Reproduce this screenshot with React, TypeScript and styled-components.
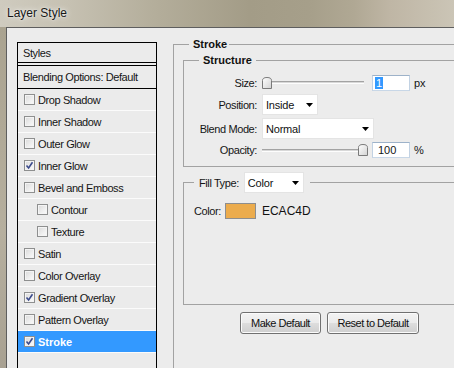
import React from "react";
import styled, { createGlobalStyle } from "styled-components";

const GlobalStyle = createGlobalStyle`
  html, body { margin: 0; padding: 0; background: #ececec; }
  body { font-family: "Liberation Sans", Arial, sans-serif; }
  * { box-sizing: border-box; }
`;

const Window = styled.div`
  width: 454px;
  height: 368px;
  overflow: hidden;
  display: flex;
  flex-direction: column;
`;

const TitleBar = styled.div`
  height: 27px;
  flex: none;
  display: flex;
  align-items: center;
  padding: 0 0 1px 7px;
  background: linear-gradient(
    90deg,
    #cfcbbf 0%,
    #c6c1b2 15%,
    #b3ad9a 35%,
    #a39c87 55%,
    #a69f8a 68%,
    #b0a894 78%,
    #bfb6a5 86%,
    #cbc5b6 100%
  );
  font-size: 12px;
  color: #171717;
  text-shadow: 0 0 6px rgba(255, 255, 255, 0.95), 0 0 2px rgba(255, 255, 255, 0.8);
`;

const Frame = styled.div`
  flex: 1;
  display: flex;
  min-height: 0;
  padding-left: 6px;
  background: linear-gradient(180deg, #aaa390 0%, #b6af9e 60%, #a8a192 100%);
`;

const Client = styled.div`
  flex: 1;
  display: flex;
  align-items: flex-start;
  padding: 10px 0 0 10px;
  border-top: 1px solid #5e5e5e;
  border-left: 1px solid #5e5e5e;
  background: #ececec;
  min-width: 0;
  overflow: hidden;
`;

const StyleList = styled.div`
  flex: none;
  width: 140px;
  height: 420px;
  margin-top: 4px;
  border: 1px solid #000;
  border-bottom: none;
  background: #ebebeb;
  display: flex;
  flex-direction: column;
  font-size: 11px;
  letter-spacing: -0.4px;
  color: #151515;
`;

const ListHeader = styled.div`
  height: 20px;
  flex: none;
  display: flex;
  align-items: center;
  padding: 1px 0 0 5px;
  border-bottom: 1px solid #000;
  margin-bottom: 2px;
`;

const BlendRow = styled.div`
  height: 24px;
  flex: none;
  display: flex;
  align-items: center;
  padding-left: 5px;
  border-top: 1px solid #000;
  border-bottom: 1px solid #000;
`;

const StyleRow = styled.div<{ $indent?: boolean; $selected?: boolean }>`
  height: 22px;
  flex: none;
  display: flex;
  align-items: center;
  gap: 3px;
  padding-left: ${(p) => (p.$indent ? 19 : 6)}px;
  border-bottom: 1px solid #fbfbfb;
  background: ${(p) => (p.$selected ? "#3399ff" : "transparent")};
  color: ${(p) => (p.$selected ? "#fff" : "inherit")};
  font-weight: ${(p) => (p.$selected ? "bold" : "normal")};
  letter-spacing: ${(p) => (p.$selected ? "0" : "-0.4px")};
`;

const CheckBox = styled.span`
  width: 11px;
  height: 11px;
  flex: none;
  display: flex;
  align-items: center;
  justify-content: center;
  border: 1px solid #8e8f8f;
  background: linear-gradient(135deg, #d9d9d9 0%, #efefef 60%, #fbfbfb 100%);
  box-shadow: inset 0 0 0 1px #f4f4f4;
`;

const Group = styled.fieldset<{ $padL?: number; $padR?: number; $padT?: number; $padB?: number }>`
  margin: 0;
  min-inline-size: 0;
  border: 1px solid #a2a2a2;
  padding: ${(p) => p.$padT ?? 0}px ${(p) => p.$padR ?? 0}px ${(p) => p.$padB ?? 0}px
    ${(p) => p.$padL ?? 0}px;
`;

const StrokeGroup = styled(Group)`
  flex: none;
  width: 313px;
  height: 400px;
  margin-left: 16px;
`;

const FillGroup = styled(Group)`
  height: 133px;
  margin-top: 5px;
`;

const Legend = styled.legend<{ $ml: number; $pl: number; $pr: number }>`
  margin-left: ${(p) => p.$ml}px;
  padding: 0 ${(p) => p.$pr}px 0 ${(p) => p.$pl}px;
  font-size: 11px;
  line-height: 13px;
  font-weight: bold;
  color: #111;
`;

const ControlLegend = styled.legend`
  margin-left: 0;
  padding: 0 6px 0 5px;
  display: flex;
  align-items: center;
  gap: 5px;
  font-size: 11px;
  letter-spacing: -0.4px;
  color: #151515;
`;

const FormGrid = styled.div`
  display: grid;
  grid-template-columns: 73px 1fr;
  grid-template-rows: 17px 21px 21px 16px;
  column-gap: 5px;
  row-gap: 3px;
  font-size: 11px;
  color: #151515;
`;

const FieldLabel = styled.span`
  justify-self: end;
  align-self: center;
  letter-spacing: -0.4px;
  white-space: nowrap;
`;

const ControlLine = styled.div`
  display: flex;
  align-items: center;
`;

const SliderBox = styled.div<{ $w: number; $mr: number }>`
  position: relative;
  width: ${(p) => p.$w}px;
  margin-right: ${(p) => p.$mr}px;
  height: 12px;
  display: flex;
  align-items: center;
  flex: none;
`;

const Track = styled.div`
  flex: 1;
  height: 3px;
  border-top: 1px solid #a3a3a3;
  border-bottom: 1px solid #fdfdfd;
  background: #d8d8d8;
`;

const Thumb = styled.svg<{ $atEnd?: boolean }>`
  position: absolute;
  top: 0;
  ${(p) => (p.$atEnd ? "right: 0;" : "left: 0;")}
`;

const NumberBox = styled.div`
  width: 38px;
  height: 16px;
  flex: none;
  display: flex;
  align-items: center;
  padding-left: 5px;
  background: #fff;
  border: 1px solid;
  border-color: #9db2c9 #c2d2e3 #c8d7e7 #c2d2e3;
  font-size: 11px;
`;

const Selected = styled.span`
  background: #3399ff;
  color: #fff;
  padding: 0 1px;
  margin-left: -3px;
  line-height: 12px;
`;

const Unit = styled.span`
  margin-left: 4px;
  font-size: 11px;
`;

const Select = styled.div<{ $w: number }>`
  width: ${(p) => p.$w}px;
  height: 21px;
  flex: none;
  display: flex;
  align-items: center;
  justify-content: space-between;
  padding: 1px 4px 0 3px;
  background: #fff;
  border: 1px solid #e4e4e4;
  font-size: 11px;
  letter-spacing: -0.2px;
  color: #111;
`;

const ColorRow = styled.div`
  display: flex;
  align-items: center;
  height: 16px;
  font-size: 11px;
  letter-spacing: -0.4px;
  color: #151515;
`;

const Swatch = styled.div<{ $color: string }>`
  width: 31px;
  height: 16px;
  margin-left: 4px;
  background: ${(p) => p.$color};
  border: 1px solid #8e8e8e;
`;

const HexText = styled.span`
  margin-left: 6px;
  font-size: 12px;
  letter-spacing: 0;
  color: #111;
`;

const ButtonRow = styled.div`
  display: flex;
  justify-content: center;
  gap: 6px;
  margin-top: 7px;
`;

const Button = styled.button<{ $w: number }>`
  width: ${(p) => p.$w}px;
  height: 22px;
  padding: 0;
  border: 1px solid #707070;
  border-radius: 3px;
  background: linear-gradient(180deg, #f3f3f3 0%, #ebebeb 48%, #dddddd 52%, #cfcfcf 100%);
  box-shadow: inset 0 0 0 1px #fbfbfb;
  font-family: "Liberation Sans", Arial, sans-serif;
  font-size: 11px;
  letter-spacing: -0.5px;
  color: #111;
`;

const Check = () => (
  <svg width="9" height="9" viewBox="0 0 9 9">
    <path d="M1.5 4.5 L3.6 7 L7.5 1.2" fill="none" stroke="#3b4b8c" strokeWidth="1.6" />
  </svg>
);

const Arrow = () => (
  <svg width="7" height="4" viewBox="0 0 7 4">
    <path d="M0 0 H7 L3.5 4 Z" fill="#000" />
  </svg>
);

const SliderThumb = ({ atEnd }: { atEnd?: boolean }) => (
  <Thumb $atEnd={atEnd} width="10" height="12" viewBox="0 0 10 12">
    <defs>
      <linearGradient id={atEnd ? "tgE" : "tgS"} x1="0" y1="0" x2="1" y2="1">
        <stop offset="0" stopColor="#ffffff" />
        <stop offset="1" stopColor="#d2d2d2" />
      </linearGradient>
    </defs>
    <path
      d="M0.5 11.5 V3.5 Q0.5 0.5 5 0.5 Q9.5 0.5 9.5 3.5 V11.5 Z"
      fill={`url(#${atEnd ? "tgE" : "tgS"})`}
      stroke="#7a7a7a"
    />
  </Thumb>
);

type StyleItem = { name: string; checked?: boolean; indent?: boolean; selected?: boolean };

const items: StyleItem[] = [
  { name: "Drop Shadow" },
  { name: "Inner Shadow" },
  { name: "Outer Glow" },
  { name: "Inner Glow", checked: true },
  { name: "Bevel and Emboss" },
  { name: "Contour", indent: true },
  { name: "Texture", indent: true },
  { name: "Satin" },
  { name: "Color Overlay" },
  { name: "Gradient Overlay", checked: true },
  { name: "Pattern Overlay" },
  { name: "Stroke", checked: true, selected: true },
];

export default function App() {
  return (
    <>
      <GlobalStyle />
      <Window>
        <TitleBar>Layer Style</TitleBar>
        <Frame>
          <Client>
            <StyleList>
              <ListHeader>Styles</ListHeader>
              <BlendRow>Blending Options: Default</BlendRow>
              {items.map((it) => (
                <StyleRow key={it.name} $indent={it.indent} $selected={it.selected}>
                  <CheckBox>{it.checked && <Check />}</CheckBox>
                  {it.name}
                </StyleRow>
              ))}
            </StyleList>

            <StrokeGroup $padL={9} $padR={9} $padT={3}>
              <Legend $ml={6} $pl={4} $pr={2}>
                Stroke
              </Legend>
              <Group $padT={7} $padB={8}>
                <Legend $ml={15} $pl={4} $pr={4}>
                  Structure
                </Legend>
                <FormGrid>
                  <FieldLabel>Size:</FieldLabel>
                  <ControlLine>
                    <SliderBox $w={102} $mr={8}>
                      <Track />
                      <SliderThumb />
                    </SliderBox>
                    <NumberBox>
                      <Selected>1</Selected>
                    </NumberBox>
                    <Unit>px</Unit>
                  </ControlLine>

                  <FieldLabel>Position:</FieldLabel>
                  <ControlLine>
                    <Select $w={56}>
                      Inside
                      <Arrow />
                    </Select>
                  </ControlLine>

                  <FieldLabel>Blend Mode:</FieldLabel>
                  <ControlLine>
                    <Select $w={112}>
                      Normal
                      <Arrow />
                    </Select>
                  </ControlLine>

                  <FieldLabel>Opacity:</FieldLabel>
                  <ControlLine>
                    <SliderBox $w={106} $mr={4}>
                      <Track />
                      <SliderThumb atEnd />
                    </SliderBox>
                    <NumberBox>100</NumberBox>
                    <Unit>%</Unit>
                  </ControlLine>
                </FormGrid>
              </Group>

              <FillGroup $padL={10} $padT={10}>
                <ControlLegend>
                  Fill Type:
                  <Select $w={60}>
                    Color
                    <Arrow />
                  </Select>
                </ControlLegend>
                <ColorRow>
                  Color:
                  <Swatch $color="#ecac4d" />
                  <HexText>ECAC4D</HexText>
                </ColorRow>
              </FillGroup>

              <ButtonRow>
                <Button $w={81}>Make Default</Button>
                <Button $w={92}>Reset to Default</Button>
              </ButtonRow>
            </StrokeGroup>
          </Client>
        </Frame>
      </Window>
    </>
  );
}
